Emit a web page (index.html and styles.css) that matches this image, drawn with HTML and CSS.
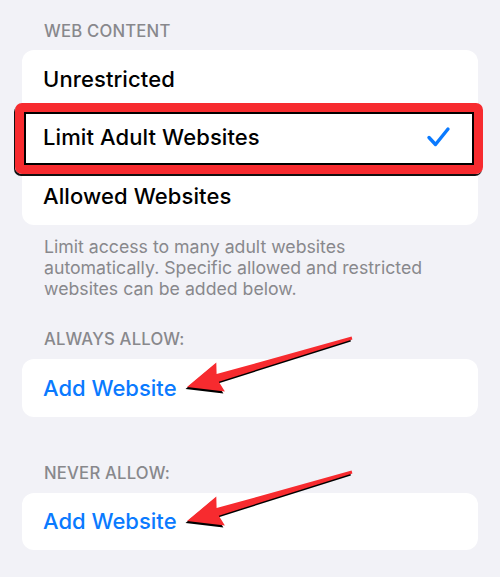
FILE: index.html
```html
<!DOCTYPE html>
<html>
<head>
<meta charset="utf-8">
<link rel="stylesheet" href="styles.css">
</head>
<body>
<div class="page">
  <div class="hdr hdr-first"><span>WEB CONTENT</span></div>
  <div class="card card-list">
    <div class="row"><span class="label">Unrestricted</span></div>
    <div class="row row-selected">
      <span class="label">Limit Adult Websites</span>
      <svg class="check" width="26" height="22" viewBox="0 0 26 22"><path d="M3 11.5 L9.5 18.5 L22 3" fill="none" stroke="#0a7aff" stroke-width="3.4" stroke-linecap="round" stroke-linejoin="round"/></svg>
      <div class="highlight"></div>
    </div>
    <div class="row"><span class="label">Allowed Websites</span></div>
  </div>
  <div class="footer">Limit access to many adult websites automatically. Specific allowed and restricted websites can be added below.</div>
  <div class="hdr hdr-always"><span>ALWAYS ALLOW:</span></div>
  <div class="card card-single"><span class="link">Add Website</span></div>
  <div class="hdr hdr-never"><span>NEVER ALLOW:</span></div>
  <div class="card card-single card-last"><span class="link">Add Website</span></div>

  <svg class="arrows" width="500" height="577" viewBox="0 0 500 577">
    <g>
      <polygon transform="translate(-1.5,2)" fill="#000" points="187,387 216.3,362.6 216.6,374.1 351.6,336.6 352.4,339.4 218.8,381.7 224.9,391.4"/>
      <polygon fill="#f72b2f" points="187,387 216.3,362.6 216.6,374.1 351.6,336.6 352.4,339.4 218.8,381.7 224.9,391.4"/>
    </g>
    <g transform="translate(0,134)">
      <polygon transform="translate(-1.5,2)" fill="#000" points="187,387 216.3,362.6 216.6,374.1 351.6,336.6 352.4,339.4 218.8,381.7 224.9,391.4"/>
      <polygon fill="#f72b2f" points="187,387 216.3,362.6 216.6,374.1 351.6,336.6 352.4,339.4 218.8,381.7 224.9,391.4"/>
    </g>
  </svg>
</div>
</body>
</html>
```

FILE: styles.css
```css
html, body {
  margin: 0;
  padding: 0;
  background: #f2f2f7;
}
.page {
  position: relative;
  width: 500px;
  height: 577px;
  overflow: hidden;
  font-family: Inter, "Liberation Sans", sans-serif;
  -webkit-font-smoothing: antialiased;
}
.hdr {
  display: flex;
  align-items: flex-end;
  padding: 0 44px;
  box-sizing: border-box;
  color: #88888c;
  font-size: 16.7px;
  font-weight: 500;
  line-height: 20px;
  letter-spacing: 0.2px;
}
.hdr-first { height: 50px; padding-bottom: 9px; }
.hdr-always { height: 59.5px; padding-bottom: 9.5px; }
.hdr-never { height: 76px; padding-bottom: 10px; }
.card {
  margin: 0 22px;
  background: #fff;
  border-radius: 12px;
}
.card-list {
  display: flex;
  flex-direction: column;
}
.row {
  position: relative;
  height: 58.33px;
  display: flex;
  align-items: center;
  justify-content: space-between;
  padding: 0 26px 0 21px;
}
.label {
  color: #000;
  font-size: 22px;
  font-weight: 500;
  letter-spacing: 0.1px;
}
.check {
  display: block;
}
.highlight {
  position: absolute;
  left: -7px;
  right: -5px;
  top: -5px;
  bottom: -7px;
  border: 9px solid #f72b2f;
  border-radius: 7px;
  box-shadow: inset 0 0 0 2px #000, -1px 2px 0 0 #111;
}
.footer {
  margin: 11.5px 0 0;
  padding: 0 44px;
  max-width: 410px;
  color: #88888c;
  font-size: 17.7px;
  line-height: 21px;
}
.card-single {
  height: 58px;
  display: flex;
  align-items: center;
  padding-left: 21px;
}
.card-last { height: 57px; }
.link {
  color: #0a7aff;
  font-size: 22px;
  font-weight: 500;
}
.arrows {
  position: absolute;
  left: 0;
  top: 0;
  pointer-events: none;
}
```
